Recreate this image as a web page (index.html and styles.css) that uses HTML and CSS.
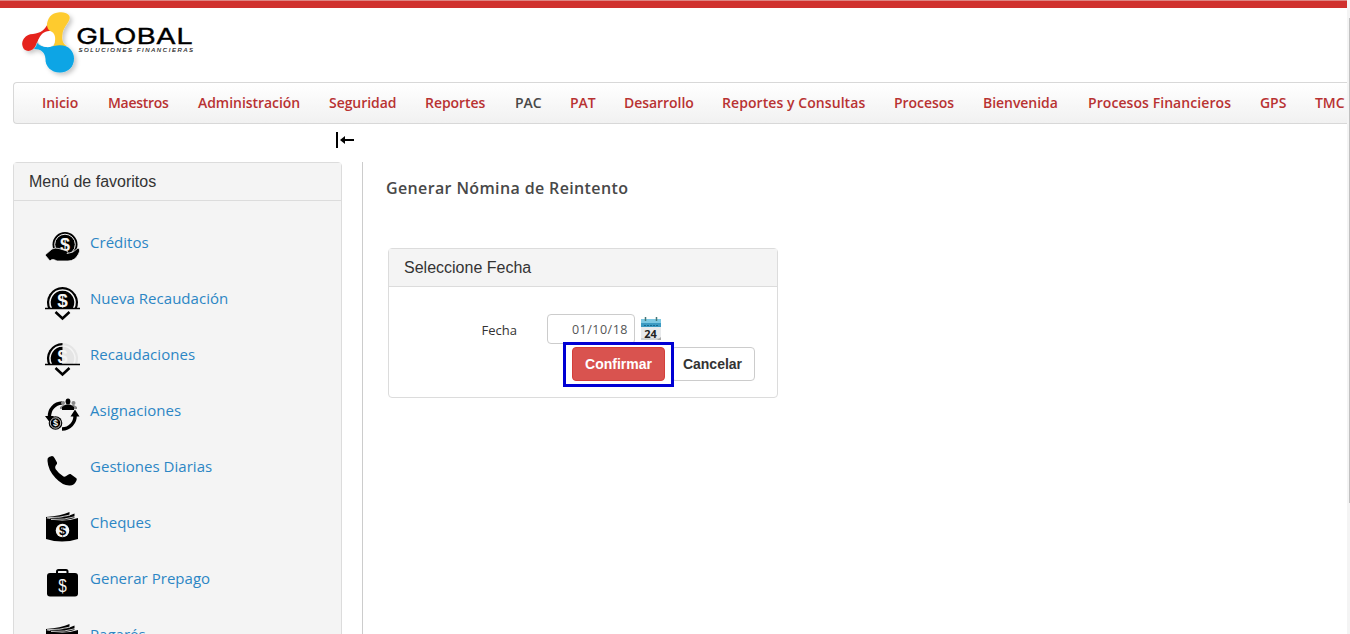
FILE: index.html
```html
<!DOCTYPE html>
<html lang="es">
<head>
<meta charset="utf-8">
<title>Global Soluciones Financieras</title>
<link rel="stylesheet" href="styles.css">
</head>
<body>
<div class="window">
  <div class="page">
    <header class="header">
      <svg class="logo" width="190" height="74" viewBox="15 8 190 74">
        <defs><filter id="shadow" x="-20%" y="-20%" width="150%" height="150%"><feDropShadow dx="2.5" dy="2.5" stdDeviation="2" flood-opacity=".22"/></filter></defs>
        <g filter="url(#shadow)">
          <path fill="#e5231b" d="M48 23C45 30 41 33 33 34C25 34 21 41 22.500 46C24 53 33 52 35.500 46C38 39 41 34 51 31Z"/>
          <path fill="#fecb2f" d="M58 12.500C66 11 72 15 69 20.500C66 26 63 29 62.500 34C61.500 40 63 44 67 46L53 47C57 41 54 34 50 31C46 28 46 22 50 16.500Q53 13 58 12.500Z"/>
          <path fill="#08a5e5" d="M34 49Q37 46 37 43C41 47 46 48 54 46C67 43 74 50 74 58.500C74 67 68 72.500 60 72.500C51 72.500 45 66 45.500 59C45 52 41 49 34 49Z"/>
          <path fill="#fff" d="M38 41C40 34 45 30.500 50 31C55 32 56.500 39 54 44C51 49 41 48 38 41Z"/>
        </g>
        <text x="76" y="43.500" class="logo-name" textLength="117" lengthAdjust="spacingAndGlyphs">GLOBAL</text>
        <text x="78.500" y="52" class="logo-sub" textLength="114.500" lengthAdjust="spacing">SOLUCIONES FINANCIERAS</text>
      </svg>
    </header>
    <nav class="nav">
      <a class="w-inicio">Inicio</a><a class="w-maestros">Maestros</a><a class="w-admin">Administración</a><a class="w-seg">Seguridad</a><a class="w-rep">Reportes</a><a class="w-pac active">PAC</a><a class="w-pat">PAT</a><a class="w-des">Desarrollo</a><a class="w-cons">Reportes y Consultas</a><a class="w-proc">Procesos</a><a class="w-bien">Bienvenida</a><a class="w-fin">Procesos Financieros</a><a class="w-gps">GPS</a><a class="w-tmc">TMC</a>
    </nav>
    <div class="collapse">
      <svg width="20" height="16" viewBox="0 0 20 16"><path d="M1 0v16M6 8h12" stroke="#000" stroke-width="2"/><path d="M4 8l5-4v8z"/></svg>
    </div>
    <div class="columns">
      <aside class="favorites">
        <h2 class="panel-title">Menú de favoritos</h2>
        <ul class="fav-list">
          <li><svg class="icon" viewBox="0 0 36 36"><circle cx="20" cy="14.500" r="12.500"/><circle cx="20" cy="14.500" r="10.300" fill="none" stroke="#f4f4f4"/><text x="20" y="20.500" class="dollar" font-size="18">$</text><path stroke="#f4f4f4" stroke-width=".8" d="M0 25L7 19Q10 17.500 14 18.500L22 21Q24 22.500 22 23.500L28 22L33 18Q36 19 33.500 24Q30 31 23 31H12Q7 28 5 31Z"/></svg><a>Créditos</a></li>
          <li><svg class="icon" viewBox="0 0 36 36"><path d="M3.400 23A15.500 15.500 0 1 1 31.600 23Z"/><path d="M6.500 22.500A12.500 12.500 0 1 1 28.500 22.500" fill="none" stroke="#f4f4f4" stroke-width="1.500"/><text x="17.500" y="21" class="dollar" font-size="19">$</text><path d="M0 22.500h35" stroke="#000" stroke-width="1.500"/><path d="M10.500 26l7 6.500 7-6.500" fill="none" stroke="#000" stroke-width="2.500"/></svg><a>Nueva Recaudación</a></li>
          <li><svg class="icon" viewBox="0 0 36 36"><path fill="#e5e5e5" d="M17.500 1A15.500 15.500 0 0 1 31.600 23H17.500Z"/><path d="M17.500 1A15.500 15.500 0 0 0 3.400 23H17.500Z"/><path d="M6.500 22.500A12.500 12.500 0 1 1 28.500 22.500" fill="none" stroke="#f4f4f4" stroke-width="1.500"/><text x="17.500" y="21" class="dollar" font-size="18">$</text><path d="M0 22.500h35" stroke="#000" stroke-width="1.500"/><path d="M10.500 26l7 6.500 7-6.500" fill="none" stroke="#000" stroke-width="2.500"/></svg><a>Recaudaciones</a></li>
          <li><svg class="icon" viewBox="0 0 36 36"><path d="M17 5A13 13 0 0 0 4.500 19M17 31A13 13 0 0 0 30 17" fill="none" stroke="#000" stroke-width="3.500"/><path d="M0 18h9l-4.500 6zM25.500 18.500l4.500-7 4.500 7z"/><g fill="#888"><circle cx="18" cy="5" r="2"/><circle cx="28.500" cy="5" r="2"/><path d="M15 11V9l3-2h11l3 2v2z"/></g><ellipse cx="23" cy="3.500" rx="2.400" ry="3"/><path d="M17 12V9l4-2.500h4L29 9v3z"/><circle cx="10.500" cy="25" r="6.800"/><circle cx="10.500" cy="25" r="5.200" fill="none" stroke="#f4f4f4" stroke-width=".8"/><text x="10.500" y="28.300" class="dollar" font-size="9">$</text></svg><a>Asignaciones</a></li>
          <li><svg class="icon" viewBox="0 0 36 36"><path d="M2.500 7Q2 4 4 3L7 2Q8.500 2 9.500 4L12 8.500Q12.500 10 11 11Q9.500 13 10.500 15Q14 20 18.500 22.500Q20.500 23 22 21.500Q24 19.500 25.500 20L31 24Q32.500 25 31 27.500Q29 31.500 25 31.500Q18 32 10.500 24Q3 16 2.500 7Z"/></svg><a>Gestiones Diarias</a></li>
          <li><svg class="icon" viewBox="0 0 36 36"><use href="#bills"/></svg><a>Cheques</a></li>
          <li><svg class="icon" viewBox="0 0 36 36"><path d="M12 7V5.500Q12 4 13.500 4H21Q22.500 4 22.500 5.500V7" fill="none" stroke="#000" stroke-width="2"/><rect x="2" y="7" width="31" height="23.500" rx="3"/><text x="17.500" y="25.500" class="dollar thin" font-size="19" textLength="8.500" lengthAdjust="spacingAndGlyphs">$</text></svg><a>Generar Prepago</a></li>
          <li><svg class="icon" viewBox="0 0 36 36"><g id="bills"><path d="M1 8Q17 13 33 8V29Q17 34 1 29Z"/><path d="M1 7Q16 6 24.500 2V5.500Q16 9 1 8Z"/><path d="M5 8.500Q20 8 29.500 3.500V8Q20 11 5 10Z"/><path d="M2 7.700Q15 8 25 5M6 9.500Q20 10 31 6.500" fill="none" stroke="#f4f4f4" stroke-width=".8"/><circle cx="17.500" cy="20.500" r="6.800" fill="#f4f4f4"/><text x="17.500" y="25" class="bill-sign">$</text></g></svg><a>Pagarés</a></li>
        </ul>
      </aside>
      <main class="content">
        <h1>Generar Nómina de Reintento</h1>
        <section class="date-panel">
          <h2 class="panel-title">Seleccione Fecha</h2>
          <div class="field">
            <label for="date">Fecha</label>
            <input id="date" value="01/10/18">
            <svg width="22" height="24" viewBox="0 0 22 24"><path fill="#e8eaec" d="M1 10h20v13H1z"/><path fill="#cfd3d6" d="M1 21h20v2H1z"/><path fill="#7cc8e2" d="M1 2h20v5H1z"/><path fill="#3c9ac2" d="M1 6h20v4H1z"/><path stroke="#176a91" stroke-dasharray="2 1" d="M4 8.500h14"/><path stroke="#477" stroke-width="1.500" d="M5.500 0v4M16.500 0v4"/><text x="10.500" y="20.500" class="day">24</text><path fill="#aaa" d="M17 23l4-3v3z"/></svg>
          </div>
          <div class="actions">
            <span class="highlight"><button class="btn primary">Confirmar</button></span>
            <button class="btn cancel">Cancelar</button>
          </div>
        </section>
      </main>
    </div>
  </div>
  <div class="scrollbar"><div class="thumb"></div></div>
</div>
</body>
</html>
```
FILE: styles.css
```css
* { box-sizing: border-box; }
body { margin: 0; overflow: hidden; background: #fff; color: #333; font-family: "Trebuchet MS", "Open Sans", sans-serif; }
.window { display: flex; height: 634px; }
.page { width: 1347px; overflow: hidden; border-top: 1px solid #df8582; }
.header { height: 81px; border-top: 7px solid #d0312e; padding-left: 15px; }
.logo { display: block; }
.logo-name { font: 22px Inter, sans-serif; fill: #000; stroke: #000; stroke-width: .3px; }
.logo-sub { font: italic 6px "Liberation Sans", sans-serif; fill: #222; stroke: #222; stroke-width: .15px; }
.nav { display: flex; gap: 29px; width: 1340px; height: 42px; margin-left: 13px; padding: 0 0 2px 28px; align-items: center; border: 1px solid #d8d8d8; border-right: 0; border-radius: 4px 0 0 4px; background: linear-gradient(#fff, #f1f1f1); font-size: 14px; font-weight: 600; color: #b83232; white-space: nowrap; }
.nav a { flex-shrink: 0; letter-spacing: -.05px; }
.nav .active { color: #484848; }
.w-inicio { width: 37px; }
.w-maestros { width: 61px; }
.nav .w-maestros { letter-spacing: -.3px; }
.w-admin { width: 102px; }
.w-seg { width: 67px; }
.w-rep { width: 61px; }
.w-pac { width: 26px; }
.w-pat { width: 25px; }
.w-des { width: 69px; }
.w-cons { width: 143px; }
.nav .w-cons, .nav .w-fin { letter-spacing: .07px; }
.w-proc { width: 60px; }
.w-bien { width: 76px; }
.w-fin { width: 143px; }
.w-gps { width: 26px; }
.w-tmc { width: 30px; }
.collapse { height: 38px; padding: 8px 0 0 336px; }
.collapse svg { display: block; }
.columns { display: flex; height: 472px; padding-left: 13px; }
.favorites { width: 329px; height: 500px; border: 1px solid #dcdcdc; border-radius: 4px 4px 0 0; background: #f4f4f4; }
.panel-title { margin: 0; height: 38px; padding-left: 15px; border-bottom: 1px solid #dcdcdc; background: #f4f4f4; font: 16px/37px "Liberation Sans", sans-serif; color: #333; }
.fav-list { margin: 0; padding: 29px 0 0 31px; list-style: none; }
.fav-list li { display: flex; height: 56px; gap: 9px; color: #2c86c4; font-size: 15px; line-height: 24px; letter-spacing: .03px; }
.icon { width: 36px; height: 36px; letter-spacing: 0; }
.dollar { fill: #f4f4f4; text-anchor: middle; font-family: "Liberation Sans", sans-serif; font-weight: bold; }
.dollar.thin { font-weight: normal; }
.bill-sign { font: bold 13px "Liberation Sans", sans-serif; text-anchor: middle; }
.content { flex: 1; margin-left: 20px; padding: 13px 0 0 23px; border-left: 1px solid #ccc; }
h1 { margin: 0 0 47px; font-size: 16px; line-height: 26px; font-weight: 600; letter-spacing: .37px; color: #484848; }
.date-panel { width: 390px; height: 150px; margin-left: 2px; border: 1px solid #dcdcdc; border-radius: 4px; }
.field { display: flex; height: 58px; padding: 27px 0 0 92.500px; }
.field label { width: 65.500px; font-size: 13px; line-height: 32px; font-weight: 500; }
.field input { width: 88px; height: 30px; padding: 0 6px; border: 1px solid #ccc; border-radius: 4px; text-align: right; color: #555; font: 12.500px "Open Sans", sans-serif; letter-spacing: .5px; }
.field svg { margin: 3px 0 0 5px; }
.day { font: bold 11px "Open Sans", sans-serif; text-anchor: middle; fill: #222; }
.actions { display: flex; align-items: flex-start; height: 45px; padding-left: 174px; margin-top: -3px; }
.highlight { display: flex; z-index: 1; width: 111px; height: 45px; flex-shrink: 0; border: 3px solid #0000d4; padding: 2px 0 0 6px; }
.btn { width: 84px; height: 34px; padding: 0; border: 1px solid #ccc; border-radius: 4px; background: #fff; color: #333; font: bold 14px "Liberation Sans", sans-serif; }
.btn.cancel { margin: 5px 0 0 -3px; padding-right: 1px; }
.btn.primary { width: 93px; border-color: #d43f3a; background: #d9534f; color: #fff; }
.scrollbar { width: 3px; padding: 18px 0 0 2px; background: #f4f4f4; }
.thumb { height: 485px; background: #c1c1c1; }
```
